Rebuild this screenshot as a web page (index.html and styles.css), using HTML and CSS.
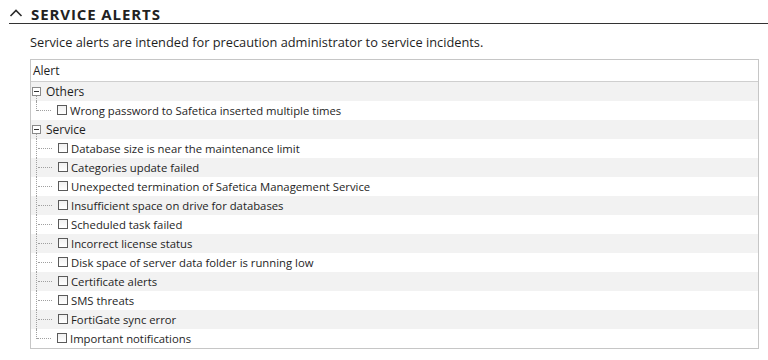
FILE: index.html
```html
<!DOCTYPE html>
<html lang="en">

<head>
    <meta charset="UTF-8">
    <meta name="viewport" content="width=device-width, initial-scale=1.0">
    <title>Service alerts</title>
    <link rel="stylesheet" href="styles.css">
</head>

<body>
    <section class="panel">
        <header class="panel-head">
            <svg class="chevron" width="14" height="10" viewBox="0 0 14 10">
                <path d="M1.5 8 L7 2.5 L12.5 8" fill="none" stroke="#2b2b2b" stroke-width="1.6" />
            </svg>
            <h2>SERVICE ALERTS</h2>
        </header>
        <p class="desc">Service alerts are intended for precaution administrator to service incidents.</p>

        <div class="tree">
            <div class="tree-head">Alert</div>
            <div class="rows">
                <div class="row group open"><span class="expander"></span>Others</div>
                <div class="row child last"><span class="guide"></span><span class="check"></span>Wrong password to Safetica inserted multiple times</div>

                <div class="row group open"><span class="expander"></span>Service</div>
                <div class="row child"><span class="guide"></span><span class="check"></span>Database size is near the maintenance limit</div>
                <div class="row child"><span class="guide"></span><span class="check"></span>Categories update failed</div>
                <div class="row child"><span class="guide"></span><span class="check"></span>Unexpected termination of Safetica Management Service</div>
                <div class="row child"><span class="guide"></span><span class="check"></span>Insufficient space on drive for databases</div>
                <div class="row child"><span class="guide"></span><span class="check"></span>Scheduled task failed</div>
                <div class="row child"><span class="guide"></span><span class="check"></span>Incorrect license status</div>
                <div class="row child"><span class="guide"></span><span class="check"></span>Disk space of server data folder is running low</div>
                <div class="row child"><span class="guide"></span><span class="check"></span>Certificate alerts</div>
                <div class="row child"><span class="guide"></span><span class="check"></span>SMS threats</div>
                <div class="row child"><span class="guide"></span><span class="check"></span>FortiGate sync error</div>
                <div class="row child last"><span class="guide"></span><span class="check"></span>Important notifications</div>
            </div>
        </div>
    </section>
</body>

</html>
```

FILE: styles.css
```css
html,
body {
    margin: 0;
    background-color: #ffffff;
}

body {
    font-family: "Open Sans", "Liberation Sans", sans-serif;
    color: #1e1e1e;
}

.panel {
    padding: 4px 0 0 9px;
}

.panel-head {
    display: flex;
    align-items: center;
    gap: 8px;
    height: 19px;
    border-bottom: 1px solid #333333;
}

.chevron {
    margin-top: -2px;
}

.panel-head h2 {
    margin: 0;
    font-size: 15px;
    font-weight: 700;
    color: #222222;
    letter-spacing: 0.9px;
}

.desc {
    margin: 10px 0 0 21px;
    font-size: 12.8px;
    line-height: 16px;
    color: #1e1e1e;
}

.tree {
    margin: 9px 9px 0 21px;
    border: 1px solid #c6c6c6;
    font-size: 11.3px;
}

.tree-head {
    height: 21px;
    line-height: 21px;
    padding-left: 2px;
    font-size: 12px;
    border-bottom: 1px solid #cfcfcf;
}

.row {
    display: flex;
    align-items: center;
    height: 19px;
    line-height: 19px;
}

.rows .row:nth-child(odd) {
    background-color: #f2f2f2;
}

/* group rows: expander box plus the start of the guide line */
.group {
    position: relative;
    padding-left: 1px;
    font-size: 12px;
}

.expander {
    position: relative;
    box-sizing: border-box;
    width: 9px;
    height: 9px;
    margin-right: 5px;
    border: 1px solid #8a8a8a;
    background: #ffffff;
}

.expander::before {
    content: "";
    position: absolute;
    left: 1px;
    top: 3px;
    width: 5px;
    height: 1px;
    background: #333333;
}

.group.open::after {
    content: "";
    position: absolute;
    left: 5px;
    top: 14px;
    bottom: 0;
    border-left: 1px dotted #a0a0a0;
}

/* child rows: dotted branch, checkbox, label */
.guide {
    position: relative;
    align-self: stretch;
    width: 21px;
    margin-left: 5px;
    border-left: 1px dotted #a0a0a0;
}

.child.last .guide {
    border-left: none;
}

.child.last .guide::before {
    content: "";
    position: absolute;
    left: 0;
    top: 0;
    height: 10px;
    border-left: 1px dotted #a0a0a0;
}

.guide::after {
    content: "";
    position: absolute;
    left: 1px;
    top: 9px;
    width: 14px;
    border-top: 1px dotted #a0a0a0;
}

.check {
    box-sizing: border-box;
    width: 10px;
    height: 10px;
    margin-right: 3px;
    margin-top: -2px;
    border: 1px solid #5a5a5a;
    background: linear-gradient(#f0f0f0, #ffffff);
}
```
